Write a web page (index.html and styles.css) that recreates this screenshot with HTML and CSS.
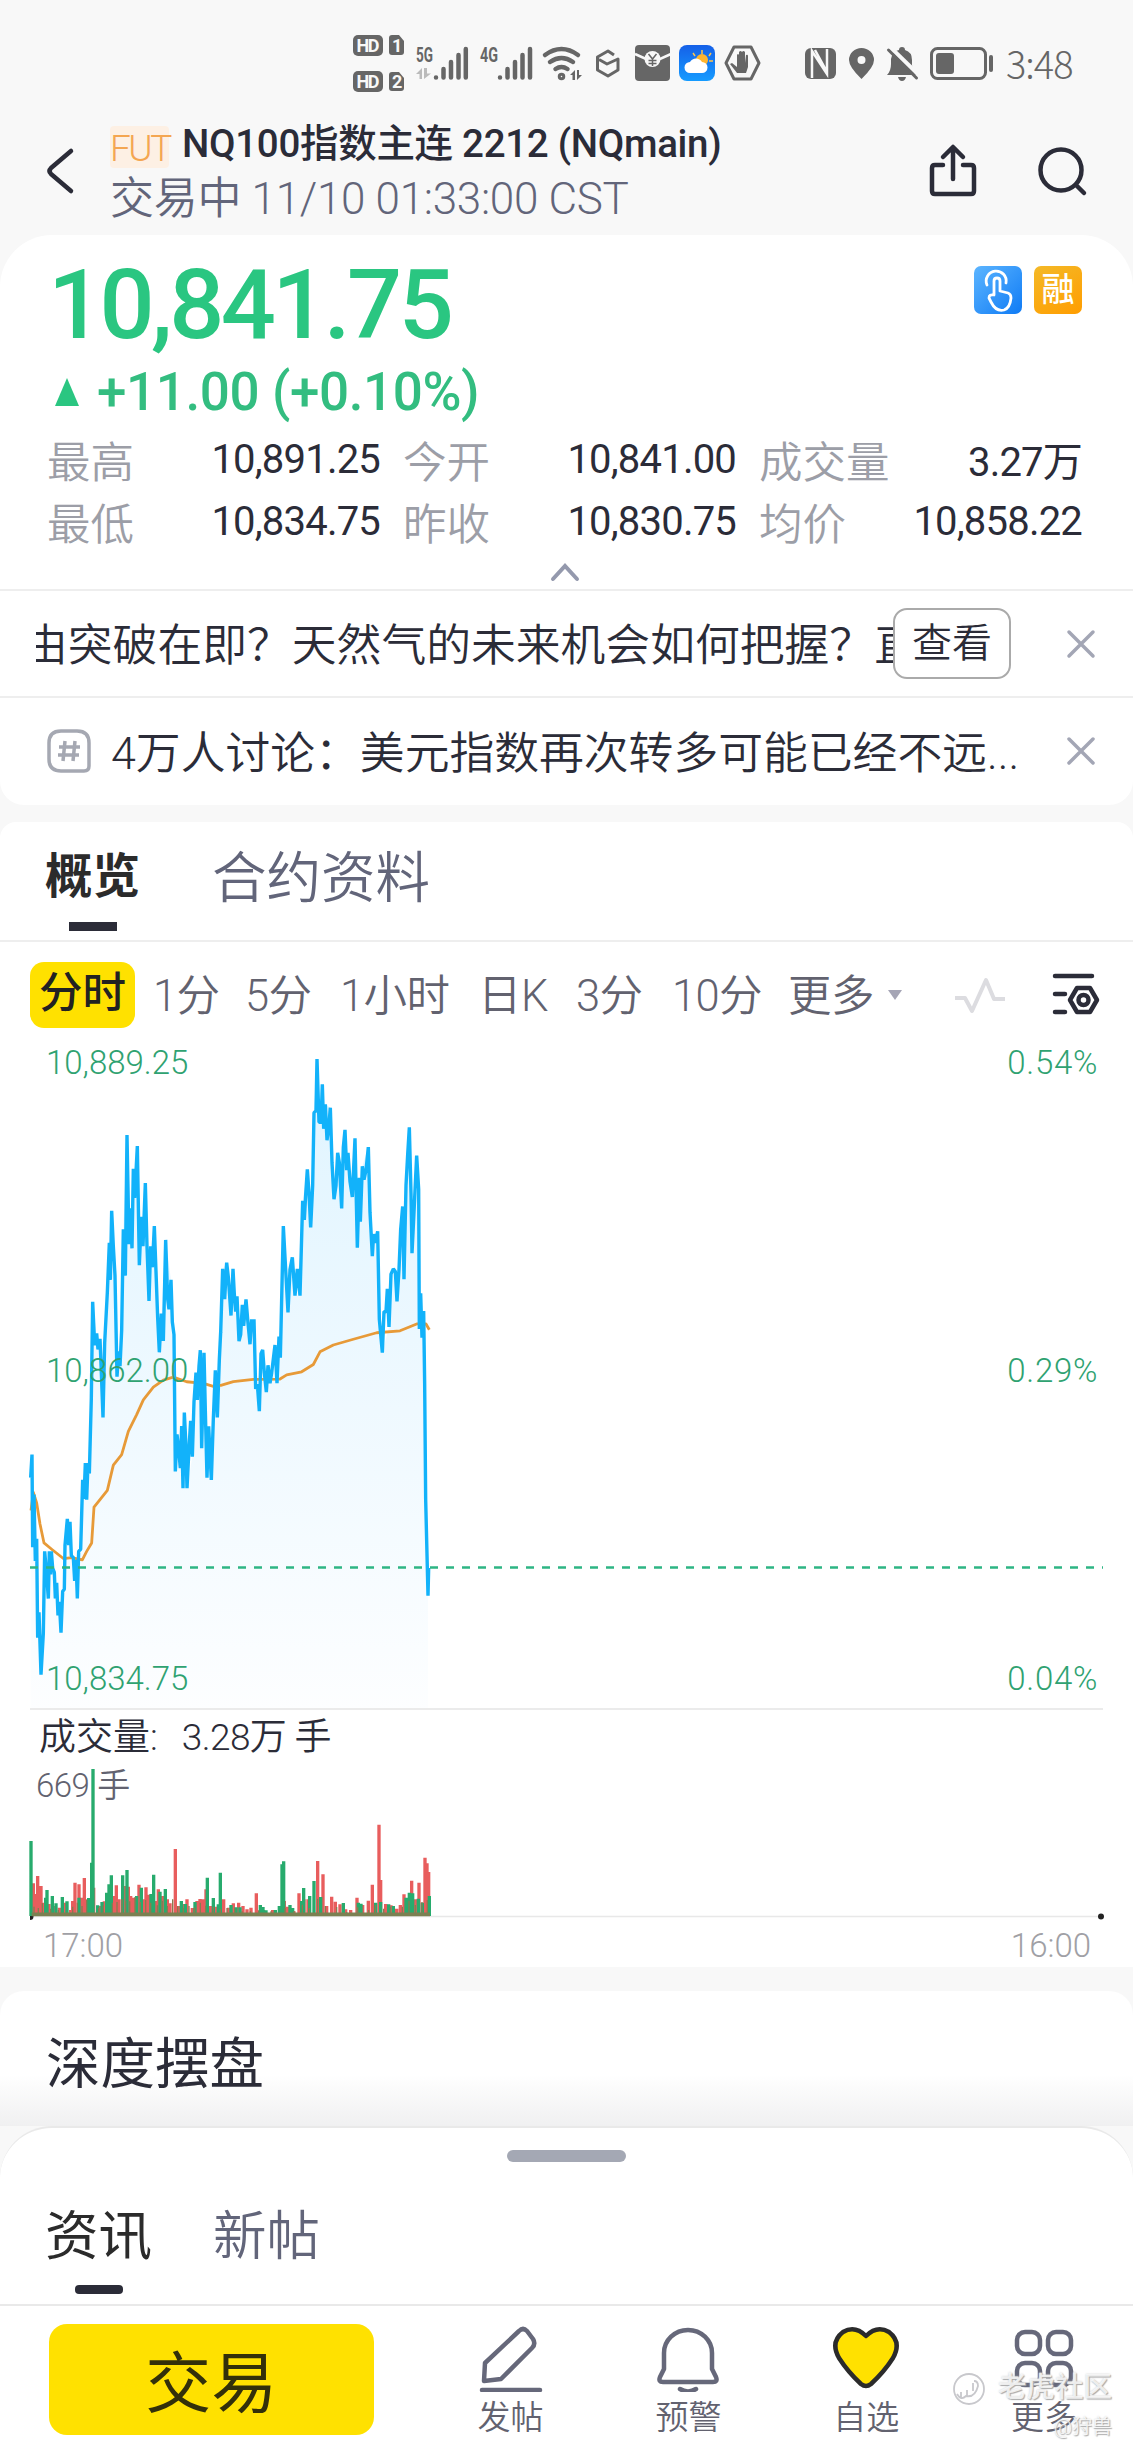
FILE: index.html
```html
<!DOCTYPE html>
<html lang="zh-CN">
<head>
<meta charset="utf-8">
<title>NQ100指数主连 2212</title>
<link rel="stylesheet" href="styles.css">
</head>
<body>
<div class="screen">
  <div class="statusbar">
    <svg width="1133" height="110" viewBox="0 0 1133 110" fill="#666">
      <rect x="353" y="35" width="30" height="21" rx="5"/><path d="M392 35h7l5 6v11a3 3 0 0 1-3 3h-9a3 3 0 0 1-3-3V38a3 3 0 0 1 3-3z"/>
      <rect x="353" y="71" width="30" height="21" rx="5"/><path d="M392 72h7l5 6v10a3 3 0 0 1-3 3h-9a3 3 0 0 1-3-3V75a3 3 0 0 1 3-3z"/>
      <g class="badge-text"><text x="356.500" y="52" textLength="23">HD</text><text x="392" y="52">1</text><text x="356.500" y="88" textLength="23">HD</text><text x="392" y="88">2</text></g>
      <g class="net-text"><text x="416" y="62" textLength="17" lengthAdjust="spacingAndGlyphs">5G</text><text x="480" y="62" textLength="18" lengthAdjust="spacingAndGlyphs">4G</text></g>
      <path fill="#bbb" d="M422 68v11h-2.500v-5h-3.500zM424 68v11l7-5.500h-4V68z"/>
      <g fill="none" stroke="#666" stroke-width="4.500" stroke-linecap="round">
        <path d="M436 77.500v0M443.500 69v8.500M451 62v15.500M458.500 55v22.500M465.800 49v28.500"/>
        <path d="M500 77.500v0M507.500 69v8.500M515 62v15.500M522.500 55v22.500M530 49v28.500"/>
        <path d="M545 55q16.500-12 33 0M550 62q11.500-8 23 0M555.500 69q6-4 12 0" />
        <circle cx="561.500" cy="76.500" r="1.500"/>
      </g>
      <path d="M575 70v10h-2.500v-5h-2.500zM577 70v10l5-5h-3v-5z"/>
      <path d="M614 55l-6-4-10.500 6v13l10.500 6 10-6V59l-11 5-8-4.500" fill="none" stroke="#666" stroke-width="3" stroke-linejoin="round"/>
      <path d="M639 45h27q4 0 4 4v28q0 4-4 4h-27q-4 0-4-4V49q0-4 4-4z"/><path d="M635 54l11 5h14l11-5" fill="none" stroke="#f8f8f8" stroke-width="2.500"/><circle cx="652.500" cy="59" r="8" fill="#f8f8f8"/><path d="M648.500 54l4 5 4-5M652.500 59v7M648.500 60.500h8M648.500 63.500h8" fill="none" stroke="#666" stroke-width="1.500"/>
      <rect x="679" y="45" width="36" height="36" rx="8" fill="url(#sky)"/>
      <g stroke="#ffc44a" stroke-width="1.500"><path d="M702 50v4M693 53l2 3M711 53l-2 3M713 61h-4"/></g><circle cx="702" cy="60" r="6" fill="#ffb52e"/>
      <path d="M690 73a5.500 5.500 0 0 1 0-11 7 7 0 0 1 12 0 5.500 5.500 0 0 1 0 11z" fill="#fff"/>
      <path d="M734 47h17l8 16-8 16h-17l-8-16z" fill="none" stroke="#666" stroke-width="3" stroke-linejoin="round"/>
      <path d="M737 73l-7-9 2-1 5 4V55q1-2 2 0v7V52q1.500-2 3 0v10V52q1.500-2 3 0v11l1-8q2-1 2 1v11l-2 6z"/>
      <rect x="805" y="48" width="31" height="31" rx="6"/><path d="M812 78V51l15 23V49M815 50l12 22" fill="none" stroke="#f8f8f8" stroke-width="2.500"/>
      <path fill-rule="evenodd" d="M861.500 79q-12.500-12-12.500-19a12.500 12 0 0 1 25 0q0 7-12.500 19zM861.500 56a4 4 0 1 0 0 8 4 4 0 0 0 0-8z"/>
      <path d="M887 75q4-4 4-11v-5q1-8 8-9 0-3 3-3t3 3q7 2 7 10v5q1 7 4 10zM898 77h8q-1 4-4 4t-4-4z"/><path d="M889 46l32 31" stroke="#f8f8f8" stroke-width="4"/><path d="M888.500 50l28 28" stroke="#666" stroke-width="3" stroke-linecap="round"/>
      <rect x="931.500" y="48.500" width="54" height="30" rx="6" fill="none" stroke="#666" stroke-width="3"/><rect x="936" y="53" width="18" height="21" rx="3"/><rect x="989" y="55" width="4" height="17" rx="2"/>
      <defs><linearGradient id="sky" x1="0" y1="0" x2="0" y2="1"><stop offset="0" stop-color="#1560e8"/><stop offset="1" stop-color="#159bff"/></linearGradient></defs>
    </svg>
    <span class="clock">3:48</span>
  </div>

  <header class="header">
    <svg class="back" width="34" height="48" viewBox="0 0 34 48"><path d="M27 4L7 21q-3 3 0 6l20 17" /></svg>
    <div class="heading">
      <div class="title"><span class="fut">FUT</span><span class="name">NQ100指数主连 2212 (NQmain)</span></div>
      <div class="session">交易中 11/10 01:33:00 CST</div>
    </div>
    <svg class="share" width="50" height="56" viewBox="0 0 50 56"><path d="M15 22H7q-3 0-3 3v23q0 3 3 3h36q3 0 3-3V25q0-3-3-3h-8M25 36V5M15 14L25 4l10 10"/></svg>
    <svg class="search" width="52" height="52" viewBox="0 0 52 52"><circle cx="24" cy="24" r="20.500"/><path d="M39 39l8 8"/></svg>
  </header>

  <section class="quote">
    <div class="quote-top">
      <div class="price">10,841.75</div>
      <div class="tags">
        <span class="tag tag-blue"><svg width="48" height="48" viewBox="0 0 48 48"><path d="M13 19a10 10 0 1 1 19-2M20 29V15q0-3 3-3t3 3v10l8 2q3 1 3 5-1 10-7 12-8 2-13-8l-2-4q0-4 5-3z"/></svg></span>
        <span class="tag tag-gold">融</span>
      </div>
    </div>
    <div class="change"><svg width="26" height="30" viewBox="0 0 26 30"><path d="M13 1l12 28H1z"/></svg><span>+11.00 (+0.10%)</span></div>
    <div class="stats">
      <div class="stat"><span>最高</span><b>10,891.25</b></div><div class="stat"><span>今开</span><b>10,841.00</b></div><div class="stat"><span>成交量</span><b>3.27万</b></div>
      <div class="stat"><span>最低</span><b>10,834.75</b></div><div class="stat"><span>昨收</span><b>10,830.75</b></div><div class="stat"><span>均价</span><b>10,858.22</b></div>
    </div>
    <svg class="collapse" width="32" height="20" viewBox="0 0 32 20"><path d="M4 17L16 4l12 13"/></svg>
  </section>

  <div class="notice">
    <div class="marquee"><span>由突破在即？天然气的未来机会如何把握？直</span></div>
    <div class="view">查看</div>
    <svg class="close" width="30" height="30" viewBox="0 0 30 30"><path d="M3 3l24 24M27 3L3 27"/></svg>
  </div>
  <div class="notice topic">
    <svg class="hash" width="46" height="46" viewBox="0 0 46 46"><path d="M15 3h16q12 0 12 12v23q0 5-5 5H15Q3 43 3 31V15Q3 3 15 3z"/><path d="M19 13l-2 20M29 13l-2 20M13 19h21M12 27h21"/></svg>
    <div class="topic-text">4万人讨论：美元指数再次转多可能已经不远...</div>
    <svg class="close" width="30" height="30" viewBox="0 0 30 30"><path d="M3 3l24 24M27 3L3 27"/></svg>
  </div>

  <nav class="tabs"><span class="tab on">概览</span><span class="tab">合约资料</span></nav>

  <div class="periods">
    <span class="pill">分时</span><span class="p1">1分</span><span class="p2">5分</span><span class="p3">1小时</span><span class="p4">日K</span><span class="p5">3分</span><span class="p6">10分</span><span class="p7">更多</span>
    <svg class="caret" width="18" height="14" viewBox="0 0 18 14"><path d="M2 2h14l-7 10z"/></svg>
    <svg class="pulse" width="54" height="40" viewBox="0 0 54 40"><path d="M2 23h10l7 13L33 5l8 19h11"/></svg>
    <svg class="gear" width="52" height="48" viewBox="0 0 52 48"><path d="M5 5h37M5 23h10M5 41h10M27 17h13l7 12-7 12H27l-7-12z"/><circle cx="33.500" cy="29" r="5"/></svg>
  </div>

  <section class="chart">
    <svg class="plot" width="1133" height="669" viewBox="0 0 1133 669">
      <defs>
        <linearGradient id="area" gradientUnits="userSpaceOnUse" x1="0" y1="0" x2="0" y2="1600"><stop offset="0" stop-color="#dff4ff"/><stop offset=".55" stop-color="#eff9ff"/><stop offset="1" stop-color="#fdfeff"/></linearGradient>
        <linearGradient id="area2" gradientUnits="userSpaceOnUse" x1="0" y1="0" x2="0" y2="1760"><stop offset="0" stop-color="#dff4ff"/><stop offset=".55" stop-color="#eff9ff"/><stop offset="1" stop-color="#fdfeff"/></linearGradient>
      </defs>
      <g transform="scale(.33333 .42088)">
        <path fill="url(#area)" d="M92 1590L92 1040 96 985 98 1205 102 1080 106 1238 110 1185 113 1420 117 1360 123 1508 130 1410 134 1215 145 1327 154 1215 163 1265 166 1327 174 1367 183 1408 193 1305 202 1138 210 1145 224 1285 232 1327 242 1210 248 1045 260 1092 268 1030 274 850 278 622 294 735 300 710 309 897 314 720 322 600 335 406 345 560 351 800 365 690 370 450 381 226 396 495 412 252 418 535 436 340 447 620 463 442 478 742 497 475 513 570 522 700 526 1025 545 917 561 1065 577 990 601 737 605 970 612 743 621 1040 634 1045 646 785 652 897 661 700V1590z"/>
      </g>
      <g transform="translate(220 0) scale(.33333 .38266)">
        <path fill="url(#area2)" d="M0 1749V765L8 598 20 582 47 710 57 787 78 678 90 795 102 730 107 912 118 970 128 810 139 920 165 797 171 897 181 830 190 486 204 712 217 568 225 668 240 668 248 420 262 338 272 490 282 190 291 50 303 215 316 168 331 177 342 416 353 295 365 440 375 235 397 410 405 257 412 543 427 330 445 280 457 565 473 500 478 730 487 817 507 750 520 598 531 683 548 435 552 625 568 228 576 557 590 302 598 755 611 708 617 1200 624 1452V1749z"/>
      </g>
      <g transform="translate(20 0) scale(.33333 .42088)">
        <polyline class="avg" points="33,1118 40,1075 50,1100 60,1150 72,1195 95,1210 130,1232 155,1230 187,1235 200,1215 215,1195 222,1110 240,1092 262,1070 280,1010 305,985 325,930 350,890 370,855 400,825 430,808 460,801 500,812 550,816 580,823 600,820"/>
        <polyline class="line" points="32,1040 36,985 38,1205 42,1080 46,1238 50,1185 53,1420 57,1360 63,1508 70,1410 74,1215 80,1270 85,1327 88,1215 92,1270 94,1215 98,1255 103,1265 106,1327 110,1290 114,1367 118,1335 123,1408 128,1310 133,1305 135,1200 142,1138 146,1200 150,1145 154,1225 160,1230 164,1285 168,1235 172,1327 176,1215 182,1210 188,1045 192,1090 196,1005 200,1092 204,1005 208,1030 214,850 218,622 224,725 230,697 234,735 240,710 244,790 249,897 254,720 262,600 268,482 271,570 275,406 280,490 285,560 291,800 296,740 300,775 305,690 310,450 316,560 321,226 327,485 331,400 336,495 340,306 344,375 352,252 358,535 364,420 369,490 376,340 381,490 387,620 392,490 397,540 403,442 408,550 413,660 418,742 424,650 430,715 437,475 443,615 447,640 453,570 457,670 462,700 466,1025 471,937 475,965 481,1017 485,917 489,1065 493,885 497,950 501,1065 507,970 512,905 517,990 522,860 528,790 532,855 537,775 541,737 545,970 552,743 556,880 561,1040 566,918 574,1045 580,900 586,785 592,897 598,760 602,694"/>
      </g>
      <g transform="translate(220 0) scale(.33333 .38266)">
        <polyline class="avg" points="0,903 40,893 100,887 180,886 200,875 245,867 280,848 300,815 340,797 400,782 470,765 540,760 590,742 618,742 628,757"/>
        <polyline class="line" points="2,765 8,598 14,677 20,582 25,620 33,720 39,598 43,665 47,710 51,670 57,787 62,770 67,692 71,747 78,678 84,740 90,795 95,730 99,760 102,730 107,912 112,900 118,970 123,820 128,810 133,870 139,920 144,850 150,897 155,870 165,797 171,897 177,775 181,830 190,486 197,600 204,712 210,600 217,568 225,668 232,598 240,668 248,420 253,470 257,405 262,338 267,400 272,490 278,380 282,190 288,185 291,50 297,215 303,215 307,116 311,232 316,168 321,262 326,230 331,177 336,320 342,416 348,380 353,295 358,320 365,440 370,280 375,235 380,340 384,295 390,370 397,410 405,257 412,543 418,360 421,475 427,330 432,365 438,340 445,280 450,450 457,565 461,507 466,530 473,500 478,730 487,817 492,710 498,710 502,650 507,750 513,612 520,598 526,605 531,683 537,600 542,495 548,435 552,625 558,380 563,300 568,228 573,400 576,557 582,450 590,302 596,390 598,755 602,662 606,778 611,708 614,900 617,1200 624,1452 626,1380"/>
      </g>
      <path class="last" d="M30 527.500H1103"/>
    </svg>
    <span class="axis tl">10,889.25</span><span class="axis ml">10,862.00</span><span class="axis bl">10,834.75</span>
    <span class="axis tr">0.54%</span><span class="axis mr">0.29%</span><span class="axis br">0.04%</span>
  </section>

  <section class="volume">
    <div class="vol-title"><span>成交量:</span><span class="vol-num">3.28万 手</span></div>
    <div class="vol-max">669<span>手</span></div>
    <svg class="bars" width="1133" height="160" viewBox="0 0 1133 160">
      <path d="M30 153.500H1103" stroke="#e8e8e8" stroke-width="1.500"/>
      <path d="M30 150a3.500 3.500 0 0 1 0 7z" fill="#222"/><circle cx="1101" cy="153.500" r="3" fill="#222"/>
      <g transform="translate(0 153) scale(.33333 -.33333)" fill="none" stroke-width="10">
        <path stroke="#e85d5d" d="M100 0v98M106 0v66M113 0v120M123 0v90M130 0v40M147 0v36M162 0v30M178 0v25M196 0v40M212 0v18M218 0v45M225 0v100M237 0v95M246 0v55M253 0v114M262 0v50M281 0v85M299 0v30M313 0v44M326 0v55M341 0v60M349 0v92M357 0v50M373 0v90M385 0v88M392 0v60M402 0v55M417 0v94M430 0v50M438 0v86M448 0v64M467 0v45M475 0v80M487 0v60M502 0v50M510 0v38M526 0v201M538 0v30M551 0v36M561 0v50M577 0v24M591 0v45M600 0v51M609 0v50M618 0v80M631 0v30M647 0v28M671 0v50M686 0v25M700 0v38M716 0v40M729 0v30M741 0v20M753 0v25M769 0v68M791 0v18M818 0v18M853 0v45M863 0v28M882 0v14M897 0v68M912 0v50M924 0v50M953 0v165M969 0v125M980 0v30M995 0v58M1006 0v43M1020 0v35M1037 0v20M1052 0v18M1071 0v55M1088 0v33M1105 0v46M1117 0v94M1137 0v274M1142 0v108M1157 0v36M1173 0v32M1190 0v22M1201 0v33M1212 0v65M1235 0v106M1246 0v50M1257 0v100M1275 0v175M1281 0v158M1286 0v132"/>
        <path stroke="#27ab6d" d="M93 0v225M137 0v55M141 0v78M157 0v60M168 0v38M187 0v57M201 0v44M237 0v55M266 0v54M275 0v160M279 0v441M293 0v32M306 0v42M320 0v70M327 0v95M334 0v122M368 0v122M381 0v138M410 0v60M424 0v85M453 0v66M461 0v124M480 0v73M496 0v81M544 0v45M556 0v36M585 0v42M622 0v115M640 0v54M655 0v35M661 0v130M693 0v33M708 0v26M720 0v26M781 0v33M789 0v27M798 0v17M826 0v18M838 0v30M846 0v155M851 0v164M870 0v33M878 0v24M905 0v45M911 0v84M929 0v60M942 0v105M962 0v57M1030 0v39M1075 0v40M1083 0v37M1127 0v40M1142 0v42M1166 0v35M1180 0v30M1218 0v55M1228 0v70M1238 0v68M1255 0v52M1267 0v40M1288 0v60"/>
        <path stroke="#887c50" stroke-width="4" d="M102 0v28M115 0v24M127 0v38M152 0v22M175 0v18M218 0v28M232 0v40M246 0v30M260 0v48M296 0v24M310 0v32M337 0v40M351 0v42M366 0v50M377 0v46M389 0v44M405 0v57M421 0v42M437 0v48M452 0v40M472 0v32M487 0v46M502 0v30M518 0v50M533 0v30M550 0v25M567 0v30M584 0v26M601 0v40M617 0v31M640 0v27M661 0v22M681 0v24M704 0v23M726 0v14M751 0v14M776 0v17M813 0v14M855 0v24M882 0v15M907 0v34M928 0v24M953 0v52M976 0v30M1010 0v27M1040 0v12M1073 0v26M1106 0v18M1126 0v33M1151 0v22M1171 0v27M1207 0v28M1227 0v46M1246 0v33M1266 0v42M1282 0v48"/>
        <path stroke="#7b8052" stroke-width="11" d="M95 5H1290"/>
      </g>
    </svg>
    <div class="times"><span>17:00</span><span>16:00</span></div>
  </section>

  <section class="depth">深度摆盘</section>

  <section class="sheet">
    <div class="handle"></div>
    <nav class="sheet-tabs"><span class="on">资讯</span><span>新帖</span></nav>
  </section>

  <footer class="bottom">
    <div class="trade">交易</div>
    <div class="item"><svg width="68" height="68" viewBox="0 0 68 68"><path d="M7 57l1-18L42 7q4-4 8 0l6 8q3 5-1 9L24 55zM5 66h58"/></svg><span>发帖</span></div>
    <div class="item"><svg width="68" height="68" viewBox="0 0 68 68"><path d="M9 58q-5 0-3-5l4-8V29a24 23 0 0 1 48 0v16l4 8q2 5-3 5zM26 65q8 5 16 0"/></svg><span>预警</span></div>
    <div class="item heart"><svg width="68" height="68" viewBox="0 0 68 68"><path d="M34 12Q45 1 57 8q13 10 4 26Q52 48 39 60q-5 4-10 0Q16 48 7 34-2 18 11 8q12-7 23 4z"/></svg><span>自选</span></div>
    <div class="item"><svg width="68" height="68" viewBox="0 0 68 68"><rect x="7" y="8" width="23" height="22" rx="8"/><rect x="38" y="8" width="23" height="22" rx="8"/><rect x="7" y="39" width="23" height="22" rx="8"/><rect x="38" y="39" width="23" height="22" rx="8"/></svg><span>更多</span></div>
    <div class="mark">
      <svg width="34" height="34" viewBox="0 0 34 34"><circle cx="17" cy="17" r="15"/><path d="M5 22q4 7 9 2 9 2 12-10 0-5-4-5M9 20v6M15 18v7M21 11v8"/></svg>
      <span class="mark-name">老虎社区</span>
      <span class="mark-user">@狩兽</span>
    </div>
  </footer>
</div>
</body>
</html>
```
FILE: styles.css
```css
* { box-sizing: border-box; }
body { margin: 0; background: #f8f8f8; font-family: Roboto, "Noto Sans CJK SC", sans-serif; font-weight: 350; color: #2b2c38; }
svg { display: block; flex: none; }
.screen { width: 1133px; height: 2453px; overflow: hidden; display: flex; flex-direction: column; white-space: nowrap; }
.screen > * { flex: none; }

.statusbar { height: 110px; position: relative; }
.clock { position: absolute; left: 1006px; top: 39px; font-size: 38px; line-height: 48px; color: #666; letter-spacing: -1px; font-weight: 300; font-family: "Noto Sans CJK SC", sans-serif; }
.badge-text { font-size: 18px; font-weight: 700; fill: #f8f8f8; }
.net-text { font-size: 20px; font-weight: 700; }

.header { height: 125px; display: flex; align-items: flex-start; }
.header svg { fill: none; stroke: #2b2c38; stroke-width: 4.5; stroke-linecap: round; stroke-linejoin: round; }
.back { margin: 37px 0 0 44px; }
.heading { margin-left: 32px; width: 800px; }
.title { display: flex; align-items: center; height: 66px; }
.fut { width: 59px; height: 42px; margin-top: 7px; border-radius: 4px; background: #fdf0e4; color: #f4a651; font-size: 37px; line-height: 46px; letter-spacing: -2.5px; text-align: center; }
.name { margin: -6px 0 0 13px; font-size: 38.5px; font-weight: 500; letter-spacing: -.3px; }
.session { height: 42px; line-height: 46px; font-size: 44px; color: #62657a; letter-spacing: -.3px; }
.share { margin: 33px 0 0 18px; }
.search { margin: 36px 0 0 59px; }

.quote { height: 356px; background: #fff; border-radius: 52px 52px 0 0; border-bottom: 2px solid #eee; padding: 23px 51px 0 48px; }
.quote-top { display: flex; justify-content: space-between; height: 94px; }
.price { font-size: 97px; line-height: 94px; font-weight: 500; color: #2ac681; letter-spacing: -3.6px; }
.tags { display: flex; gap: 12px; padding-top: 8px; }
.tag { width: 48px; height: 48px; border-radius: 7px; color: #fff; font-size: 33px; line-height: 48px; text-align: center; font-weight: 500; }
.tag-blue { background: linear-gradient(135deg, #5cb5ff, #0f7bf5); }
.tag-blue svg { fill: none; stroke: #fff; stroke-width: 2.8; stroke-linejoin: round; stroke-linecap: round; }
.tag-gold { background: linear-gradient(150deg, #f4b928, #ff9d00); }
.change { display: flex; align-items: center; height: 79px; padding-left: 6px; gap: 17px; font-size: 53px; font-weight: 500; color: #33bd80; letter-spacing: -.4px; }
.change svg { fill: #2ac681; }
.stats { display: grid; grid-template-columns: 331px 331px 321px; column-gap: 25px; grid-auto-rows: 62px; margin-top: -3px; }
.stat { display: flex; justify-content: space-between; align-items: center; }
.stat span { font-size: 43.5px; color: #9c9ea7; margin-left: -1px; }
.stat b { font-weight: 400; font-size: 40px; letter-spacing: -.8px; margin-right: -1px; }
.collapse { margin: 10px auto 0; fill: none; stroke: #9499ad; stroke-width: 4; stroke-linecap: round; }

.notice { height: 107px; background: #fff; border-bottom: 2px solid #eee; display: flex; align-items: center; font-size: 44.8px; }
.marquee { margin: -4px 0 0 36px; width: 857px; overflow: hidden; }
.marquee span { margin-left: -13px; }
.view { width: 118px; height: 71px; border: 2px solid #aaa; border-radius: 14px; background: #fff; font-size: 40px; line-height: 68px; text-align: center; }
.close { margin-left: 55px; fill: none; stroke: #a3a6b5; stroke-width: 3.5; stroke-linecap: round; }
.topic { border-bottom: 0; border-radius: 0 0 24px 24px; padding-bottom: 2px; }
.hash { margin-left: 46px; fill: none; stroke: #a5a8b2; stroke-width: 3.5; }
.topic-text { margin: -3px 0 0 19px; width: 928px; }
.topic .close { margin-left: 27px; }

.tabs { margin-top: 17px; height: 120px; background: #fff; border-radius: 16px 16px 0 0; border-bottom: 2px solid #eee; display: flex; padding-left: 45px; gap: 72px; }
.tab { font-size: 54.5px; line-height: 112px; color: #62657a; }
.tab.on { font-size: 47.5px; line-height: 110px; font-weight: 700; color: #2b2b2b; display: flex; flex-direction: column; align-items: center; height: 110px; }
.tab.on::after { content: ""; width: 48px; height: 9px; background: #2b2c38; margin-top: -10px; flex: none; }

.periods { height: 98px; background: #fff; display: flex; align-items: center; padding: 7px 0 0 30px; font-size: 43.5px; color: #62626f; letter-spacing: -.6px; }
.pill { width: 105px; height: 66px; margin-right: 18px; border-radius: 14px; background: #ffe100; color: #222; font-weight: 500; line-height: 64px; text-align: center; letter-spacing: 0; }
.periods span:not(.pill) { margin-top: -5px; flex: none; }
.p1 { width: 92px; } .p2 { width: 95px; } .p3 { width: 138px; } .p4 { width: 98px; } .p5 { width: 96px; } .p6 { width: 116px; } .p7 { width: 98px; }
.caret { fill: #a5a5b5; }
.pulse { margin-left: 49px; fill: none; stroke: #dcdce0; stroke-width: 4; stroke-linejoin: round; }
.gear { margin-left: 43px; fill: none; stroke: #2b2c38; stroke-width: 4.5; stroke-linecap: round; stroke-linejoin: round; }

.chart { height: 671px; background: #fff; position: relative; border-bottom: 1px solid transparent; }
.chart::after { content: ""; position: absolute; left: 30px; right: 30px; bottom: 0; height: 2px; background: #ebebeb; }
.line { fill: none; stroke: #12b2fa; stroke-width: 3.4; vector-effect: non-scaling-stroke; stroke-linejoin: bevel; }
.avg { fill: none; stroke: #e79a38; stroke-width: 2.8; vector-effect: non-scaling-stroke; stroke-linejoin: round; }
.last { stroke: #2eb584; stroke-width: 2.5; stroke-dasharray: 8 8; }
.axis { position: absolute; font-size: 33px; line-height: 40px; color: #2fa271; letter-spacing: 0; }
.tl, .ml, .bl { left: 46px; } .tr, .mr, .br { right: 35px; letter-spacing: .7px; }
.tl, .tr { top: 3px; } .ml, .mr { top: 311px; } .bl, .br { top: 619px; }

.volume { height: 256px; background: #fff; }
.vol-title { padding-left: 39px; height: 52px; line-height: 54px; font-size: 37px; display: flex; }
.vol-num { margin-left: 24px; letter-spacing: -.6px; }
.vol-max { padding-left: 36px; height: 42px; line-height: 46px; font-size: 33px; color: #62626f; letter-spacing: -.6px; }
.vol-max span { margin-left: 8px; }
.bars { margin-top: -42px; position: relative; }
.times { display: flex; justify-content: space-between; padding: 0 42px 0 43px; margin-top: 3px; font-size: 33px; line-height: 40px; color: #a0a0a5; }

.depth { margin-top: 24px; height: 135px; background: linear-gradient(#fff 0 62%, #f0f0f1); border-radius: 24px 24px 0 0; font-size: 54.5px; line-height: 146px; padding-left: 46px; font-weight: 400; }
.sheet { height: 180px; background: #fff; border-top: 2px solid #e9e9e9; border-bottom: 2px solid #e9e9e9; border-radius: 52px 52px 0 0; padding-top: 22px; }
.handle { width: 119px; height: 12px; border-radius: 6px; background: #a4a8b4; margin: 0 auto; }
.sheet-tabs { display: flex; gap: 61px; padding: 33px 0 0 45px; font-size: 53.500px; line-height: 84px; color: #62657a; }
.sheet-tabs .on { color: #2b2b2b; font-weight: 400; display: flex; flex-direction: column; align-items: center; }
.sheet-tabs .on::after { content: ""; width: 48px; height: 9px; border-radius: 4px; background: #2b2c38; margin-top: 6px; }

.bottom { height: 148px; background: #fff; position: relative; display: flex; padding-left: 49px; }
.trade { width: 325px; height: 111px; margin: 18px 48px 0 0; background: #ffe100; border-radius: 18px; font-size: 66px; line-height: 121px; text-align: center; font-weight: 400; color: #33300a; }
.item { width: 178px; display: flex; flex-direction: column; align-items: center; color: #62626f; font-size: 33px; line-height: 42px; padding-top: 18px; }
.item svg { fill: none; stroke: #66687a; stroke-width: 4.5; stroke-linejoin: round; stroke-linecap: round; }
.item span { margin-top: 5px; }
.heart svg { fill: #ffe100; stroke: #2b2b2b; }
.mark { position: absolute; right: 21px; top: 66px; width: 162px; display: grid; grid-template-columns: 48px 1fr; color: #fffc; text-shadow: 1px 1px 1px #aaa, 0 0 2px #ccc; }
.mark svg { fill: #fffa; stroke: #c8c8cc; stroke-width: 1.8; margin-left: 2px; }
.mark-name { font-size: 28.500px; line-height: 32px; font-weight: 500; }
.mark-user { grid-column: 1 / 3; text-align: right; font-size: 20px; line-height: 38px; margin-top: 2px; }
```
